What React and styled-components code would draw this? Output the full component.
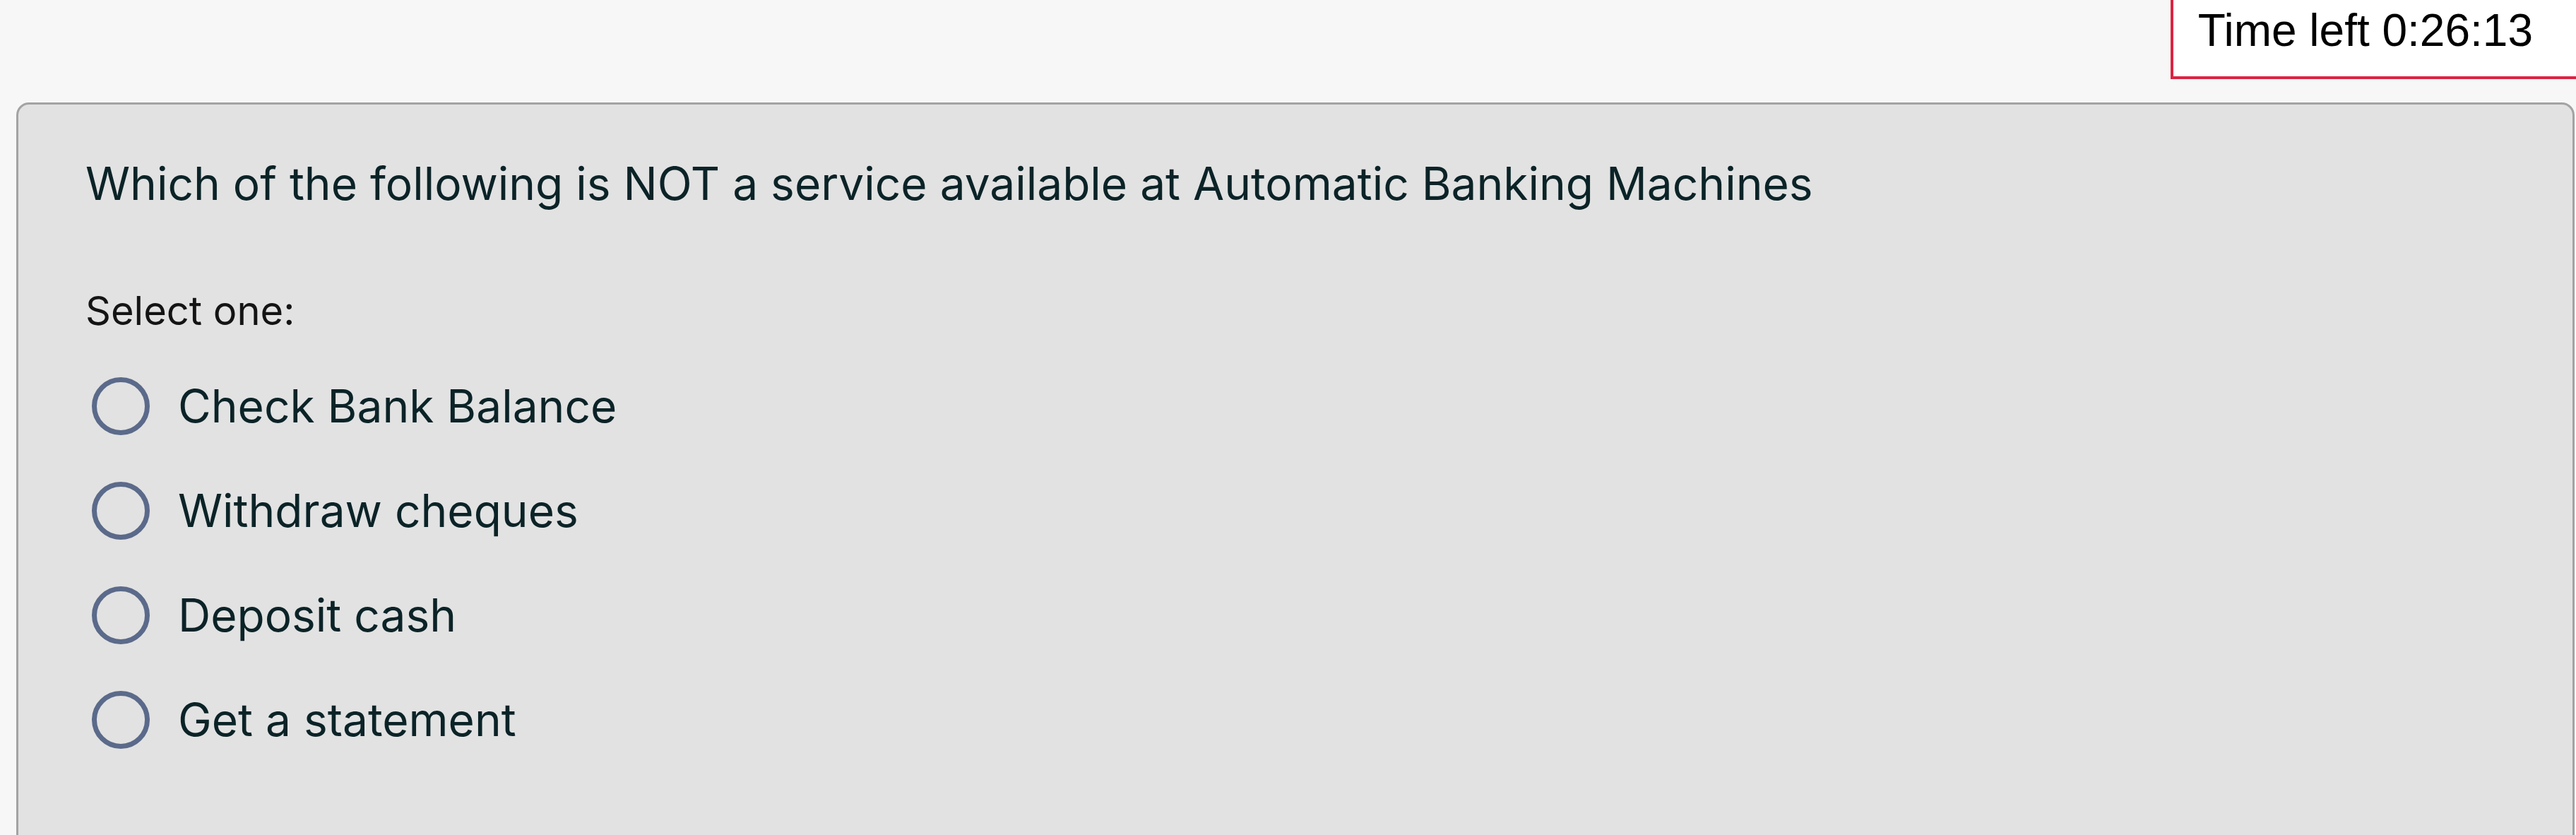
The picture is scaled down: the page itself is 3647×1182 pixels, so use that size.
import React from 'react'
import styled, { createGlobalStyle } from 'styled-components'

const GlobalStyle = createGlobalStyle`
  html, body {
    margin: 0;
    padding: 0;
    background: #f7f7f7;
    overflow: hidden;
  }
`

const Pagina = styled.div`
  display: flex;
  flex-direction: column;
  width: 3647px;
  height: 1182px;
  overflow: hidden;
`

const Cabecalho = styled.header`
  display: flex;
  justify-content: flex-end;
  align-items: flex-start;
`

const Cronometro = styled.div`
  background: #ffffff;
  border-left: 4px solid #dc2342;
  border-bottom: 4px solid #dc2342;
  padding: 4px 61px 26px 35px;
  font-family: "Liberation Sans", Arial, sans-serif;
  font-size: 64px;
  line-height: 78px;
  color: #000000;
  white-space: nowrap;
`

const Cartao = styled.section`
  margin: 33px 2px 0 23px;
  min-height: 1100px;
  background: #e2e2e2;
  border: 3px solid #a3a3a3;
  border-radius: 18px;
  padding: 64px 95px 0 95px;
  font-family: Inter, "Noto Sans", sans-serif;
`

const Pergunta = styled.p`
  margin: 0;
  font-size: 64px;
  line-height: 96px;
  color: #0b2327;
`

const Instrucao = styled.p`
  margin: 90px 0 0 0;
  font-size: 56px;
  line-height: 84px;
  color: #141414;
`

const ListaOpcoes = styled.div`
  display: flex;
  flex-direction: column;
  margin-top: 19px;
`

const Opcao = styled.label`
  display: flex;
  align-items: center;
  gap: 40px;
  height: 148px;
  padding-left: 9px;
`

const Radio = styled.span`
  box-sizing: border-box;
  width: 82px;
  height: 82px;
  border: 7px solid #5b6a8a;
  border-radius: 50%;
  flex-shrink: 0;
`

const TextoOpcao = styled.span`
  font-size: 64px;
  line-height: 96px;
  color: #0b2327;
`

const opcoes = ['Check Bank Balance', 'Withdraw cheques', 'Deposit cash', 'Get a statement']

const App = () => {
  return (
    <Pagina>
      <GlobalStyle />
      <Cabecalho>
        <Cronometro>Time left 0:26:13</Cronometro>
      </Cabecalho>
      <Cartao>
        <Pergunta>Which of the following is NOT a service available at Automatic Banking Machines</Pergunta>
        <Instrucao>Select one:</Instrucao>
        <ListaOpcoes>
          {opcoes.map(texto => (
            <Opcao key={texto}>
              <Radio />
              <TextoOpcao>{texto}</TextoOpcao>
            </Opcao>
          ))}
        </ListaOpcoes>
      </Cartao>
    </Pagina>
  )
}

export default App
